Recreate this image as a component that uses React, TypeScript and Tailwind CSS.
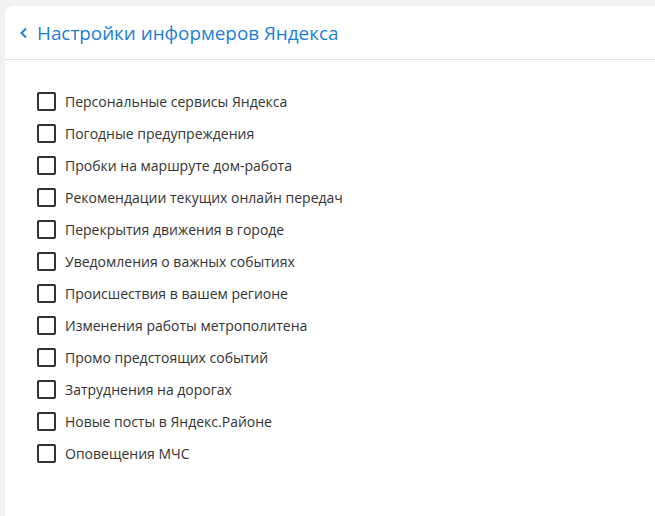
const items = [
  "Персональные сервисы Яндекса",
  "Погодные предупреждения",
  "Пробки на маршруте дом-работа",
  "Рекомендации текущих онлайн передач",
  "Перекрытия движения в городе",
  "Уведомления о важных событиях",
  "Происшествия в вашем регионе",
  "Изменения работы метрополитена",
  "Промо предстоящих событий",
  "Затруднения на дорогах",
  "Новые посты в Яндекс.Районе",
  "Оповещения МЧС",
];

export default function App() {
  return (
    <div
      className="min-h-screen bg-[#f2f1ef] pl-[5px] pt-[6px] flex"
      style={{ fontFamily: '"Open Sans", "Noto Sans", sans-serif' }}
    >
      <div className="flex-1 bg-white rounded-tl-lg flex flex-col">
        {/* header */}
        <div className="h-[54px] flex items-center border-b border-[#e3e3e3] pl-[14px]">
          <svg width="10" height="12" viewBox="0 0 10 12" className="mr-[8px] mt-[1px]">
            <path d="M7 1.5 L2.5 6 L7 10.5" fill="none" stroke="#1a7fd6" strokeWidth="2" />
          </svg>
          <h1 className="text-[18.85px] text-[#1a7fd6] pt-[2px]">Настройки информеров Яндекса</h1>
        </div>

        {/* options */}
        <div className="flex flex-col pt-[25px] pl-[32px]">
          {items.map((t) => (
            <label key={t} className="h-[32px] flex items-center gap-[9px] cursor-pointer">
              <span className="w-[19px] h-[19px] border-2 border-[#333] rounded-[2px] shrink-0" />
              <span className="text-[14px] text-[#333]">{t}</span>
            </label>
          ))}
        </div>
      </div>
    </div>
  );
}
